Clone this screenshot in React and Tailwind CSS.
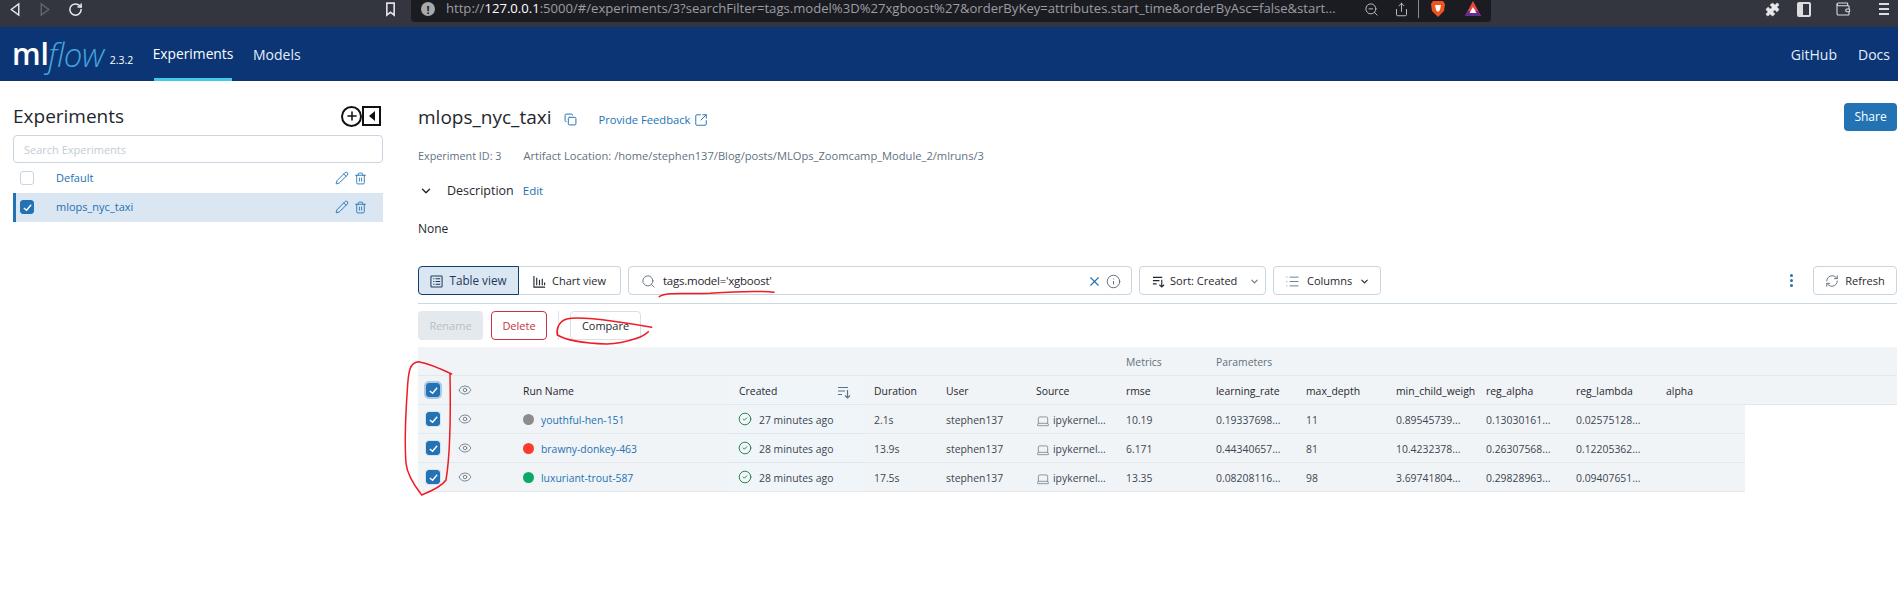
import React from "react";
import { Eye, Pencil, Trash2, Search, X, Info, ChevronDown, RotateCw, Laptop, CircleCheck, Copy, SquareArrowOutUpRight, ZoomOut, Share, Puzzle, Wallet, RefreshCw, Plus, List } from "lucide-react";

const font = "font-['Open_Sans',sans-serif]";

function Check({ on, focus, small }) {
  return (
    <span className={`flex h-[14px] w-[14px] shrink-0 items-center justify-center rounded-[3px] border ${on ? "border-[#2272b4] bg-[#2272b4]" : "border-[#c9d5e0] bg-white"} ${focus ? "shadow-[0_0_0_2px_#a9c9e6]" : small ? "shadow-[0_0_0_1px_#d5e3ef]" : ""}`}>
      {on && (
        <svg viewBox="0 0 12 12" className="h-[11px] w-[11px]" fill="none" stroke="white" strokeWidth="1.5"><path d="M2 6.5 5 9l5-6" /></svg>
      )}
    </span>
  );
}

function SortIcon({ className }) {
  return (
    <svg viewBox="0 0 14 14" className={className} fill="none" stroke="currentColor" strokeWidth="1.2">
      <path d="M1 2.5h10M1 6h7M1 9.5h4M10.5 5v8M8 10.5l2.5 2.5 2.5-2.5" />
    </svg>
  );
}

function Hcell({ w, children, className = "" }) {
  return <div className={`flex h-full shrink-0 items-center pl-2 pt-[3px] ${w} ${className}`}>{children}</div>;
}

const cols = [
  { name: "youthful-hen-151", dot: "bg-[#8c8c8c]", time: "27 minutes ago", dur: "2.1s", rmse: "10.19", vals: ["0.19337698...", "11", "0.89545739...", "0.13030161...", "0.02575128..."] },
  { name: "brawny-donkey-463", dot: "bg-[#fb3b2c]", time: "28 minutes ago", dur: "13.9s", rmse: "6.171", vals: ["0.44340657...", "81", "10.4232378...", "0.26307568...", "0.12205362..."] },
  { name: "luxuriant-trout-587", dot: "bg-[#0ba868]", time: "28 minutes ago", dur: "17.5s", rmse: "13.35", vals: ["0.08208116...", "98", "3.69741804...", "0.29828963...", "0.09407651..."] },
];

export default function App() {
  return (
    <div className={`relative h-[606px] w-[1898px] overflow-hidden bg-white ${font} text-[#1f272d]`}>
      {/* browser chrome */}
      <div className="flex h-[27px] items-start bg-[#33353f] text-[#d8dae0]">
        <div className="flex h-[22px] w-[411px] shrink-0 items-center pb-[4px]">
          <svg viewBox="0 0 12 16" className="ml-[9px] h-[15px] w-[12px]" fill="none" stroke="#e8e8ea" strokeWidth="1.5"><path d="M10 2 2 8l8 6z" /></svg>
          <svg viewBox="0 0 12 16" className="ml-[18px] h-[15px] w-[12px]" fill="none" stroke="#63656e" strokeWidth="1.5"><path d="M2 2l8 6-8 6z" /></svg>
          <RotateCw className="ml-[17px] h-[15px] w-[15px] text-[#e8e8ea]" strokeWidth={2.4} />
          <svg viewBox="0 0 12 16" className="ml-[302px] h-[15px] w-[11px]" fill="none" stroke="#e0e0e4" strokeWidth="1.8"><path d="M2 1h8v13l-4-3-4 3z" /></svg>
        </div>
        <div className="flex h-[22px] w-[1080px] shrink-0 items-center rounded-b-[4px] bg-[#1b1c22] pb-[4px]">
          <span className="ml-[10px] flex h-[14px] w-[14px] items-center justify-center rounded-full bg-[#a8a9ad] text-[11px] font-bold leading-none text-[#1b1c22]">!</span>
          <span className="ml-[11px] w-[906px] shrink-0 whitespace-nowrap text-[13.1px] leading-none text-[#9b9da3]">http://<span className="text-white">127.0.0.1</span>:5000/#/experiments/3?searchFilter=tags.model%3D%27xgboost%27&amp;orderByKey=attributes.start_time&amp;orderByAsc=false&amp;start...</span>
          <ZoomOut className="ml-[12px] h-[15px] w-[15px] text-[#c4c5c9]" strokeWidth={1.5} />
          <Share className="ml-[15px] h-[15px] w-[15px] text-[#c4c5c9]" strokeWidth={1.5} />
          <span className="ml-[9px] h-[18px] w-px bg-[#8a8b90]" />
          <svg viewBox="0 0 16 18" className="ml-[11px] h-[18px] w-[16px]"><path d="M3 1h10l2 3-1 7-6 6-6-6-1-7z" fill="#f1531d" /><path d="M5 5h6l-1 5-2 2-2-2z" fill="#fff" /></svg>
          <svg viewBox="0 0 18 18" className="ml-[18px] h-[18px] w-[18px]"><path d="M9 1 17 16H1z" fill="#e8483f" /><path d="M1 16h16l-3-5H4z" fill="#662d91" /><path d="M9 7l3.5 6h-7z" fill="#fff" /></svg>
        </div>
        <div className="flex h-[22px] flex-1 items-center pb-[4px] text-[#dcdde1]">
          <Puzzle className="ml-[274px] h-[15px] w-[15px] fill-[#e8e8ea]" strokeWidth={1} />
          <span className="ml-[17px] flex h-[15px] w-[14px] rounded-[2px] border-2 border-[#dcdde1]"><span className="w-[4px] bg-[#dcdde1]" /></span>
          <Wallet className="ml-[24px] h-[16px] w-[16px]" strokeWidth={1.6} />
          <span className="ml-[28px] flex w-[10px] flex-col gap-[3px]"><span className="h-[2px] bg-[#dcdde1]" /><span className="h-[2px] bg-[#dcdde1]" /><span className="h-[2px] bg-[#dcdde1]" /></span>
        </div>
      </div>

      {/* app header */}
      <div className="flex h-[54px] bg-[#0b3574] text-[#e3eefa]">
        <div className="flex w-[154px] shrink-0 items-center pl-[12px]">
          <span className="text-[30px] font-semibold leading-none text-white">ml</span>
          <span className="-ml-px text-[33px] font-light italic leading-none tracking-[-0.5px] text-[#43a3dd]">flow</span>
          <span className="ml-[6px] mt-[13px] text-[10.5px] leading-none text-white">2.3.2</span>
        </div>
        <div className="flex h-full w-[78px] items-center justify-center border-b-[3px] border-[#43c9ed] pt-[4px] text-[13.8px] text-white">Experiments</div>
        <div className="ml-[21px] flex h-full items-center pt-[1px] text-[14px]">Models</div>
        <div className="ml-auto flex h-full items-center gap-[21px] pr-[8px] pt-[1px] text-[14px]">
          <span>GitHub</span>
          <span>Docs</span>
        </div>
      </div>

      {/* body */}
      <div className="flex">
        <aside className="w-[418px] shrink-0 pl-[13px] pr-[35px]">
          <div className="flex h-[54px] items-center justify-between pl-0 pr-[2px] pt-[16px]">
            <h1 className="text-[19px] font-medium leading-none">Experiments</h1>
            <div className="flex items-center">
              <span className="flex h-[21px] w-[21px] items-center justify-center rounded-full border-2 border-[#111]"><Plus className="h-[14px] w-[14px] text-[#111]" strokeWidth={2.6} /></span>
              <span className="flex h-[20px] w-[19px] items-center justify-center border-2 border-[#111]"><span className="h-0 w-0 border-y-[5px] border-r-[6px] border-y-transparent border-r-[#111]" /></span>
            </div>
          </div>
          <div className="flex h-[28px] items-center rounded-[4px] border border-[#c9d5e0] pl-[10px] pt-[2px] text-[11px] text-[#c3ccd4]">Search Experiments</div>
          <div className="flex h-[30px] items-center pl-[7px] pr-[16px] text-[11px] text-[#2272b4]">
            <Check />
            <span className="ml-[22px]">Default</span>
            <Pencil className="ml-auto h-[14px] w-[14px]" strokeWidth={1.6} />
            <Trash2 className="ml-[5px] h-[13px] w-[13px]" strokeWidth={1.6} />
          </div>
          <div className="flex h-[29px] items-center border-l-[3px] border-[#2272b4] bg-[#dae6f2] pb-[1px] pl-[4px] pr-[16px] text-[11px] text-[#2272b4]">
            <Check on />
            <span className="ml-[22px]">mlops_nyc_taxi</span>
            <Pencil className="ml-auto h-[14px] w-[14px]" strokeWidth={1.6} />
            <Trash2 className="ml-[5px] h-[13px] w-[13px]" strokeWidth={1.6} />
          </div>
        </aside>

        <main className="flex-1 pr-px">
          <div className="flex h-[50px] items-end justify-between">
            <div className="flex items-center pb-[1px]">
              <span className="text-[19px] font-medium leading-[26px]">mlops_nyc_taxi</span>
              <Copy className="ml-[13px] mt-[4px] h-[13px] w-[13px] text-[#2272b4]" strokeWidth={1.8} />
              <span className="ml-[21px] mt-[6px] text-[11.2px] text-[#2272b4]">Provide Feedback</span>
              <SquareArrowOutUpRight className="ml-[4px] mt-[5px] h-[14px] w-[14px] text-[#2272b4]" strokeWidth={1.6} />
            </div>
            <button className="mb-[-1px] mt-[22px] h-[28px] w-[53px] self-start rounded-[4px] bg-[#2272b4] text-[12px] text-white">Share</button>
          </div>
          <div className="mt-[17px] flex h-[16px] items-center gap-[22px] text-[11.15px] text-[#5f7281]">
            <span className="text-[10.8px]">Experiment ID: 3</span>
            <span>Artifact Location: /home/stephen137/Blog/posts/MLOps_Zoomcamp_Module_2/mlruns/3</span>
          </div>
          <div className="mt-[17px] flex h-[20px] items-center">
            <ChevronDown className="ml-[1px] h-[14px] w-[14px]" strokeWidth={2.4} />
            <span className="ml-[14px] text-[12.5px]">Description</span>
            <span className="ml-[9px] text-[11.5px] text-[#2272b4]">Edit</span>
          </div>
          <div className="mt-[19px] h-[18px] text-[12px] leading-[18px]">None</div>

          {/* toolbar */}
          <div className="mt-[28px] flex h-[29px] items-center whitespace-nowrap text-[11px]">
            <div className="flex h-full w-[101px] items-center justify-center gap-[6px] rounded-l-[4px] border border-[#0e3f6e] bg-[#dae6f2] pt-px text-[11.7px] text-[#1f3a5a]">
              <svg viewBox="0 0 14 14" className="h-[13px] w-[13px]" fill="none" stroke="currentColor" strokeWidth="1.1"><rect x="1" y="1" width="12" height="12" rx="1" /><path d="M3.5 4h1.2M3.5 7h1.2M3.5 10h1.2M6 4h5M6 7h5M6 10h5" /></svg>
              <span>Table view</span>
            </div>
            <div className="flex h-full w-[102px] items-center justify-center gap-[6px] rounded-r-[4px] border border-l-0 border-[#c9d5e0] pt-px">
              <svg viewBox="0 0 14 14" className="h-[13px] w-[13px]" fill="none" stroke="currentColor" strokeWidth="1.2"><path d="M1 1v12h12M4 11V3M7 11V5M10 11V4M12.5 11V8" /></svg>
              <span>Chart view</span>
            </div>
            <div className="ml-[7px] flex h-full w-[504px] items-center rounded-[4px] border border-[#c9d5e0] pl-[12px] pr-[10px] pt-px">
              <Search className="h-[15px] w-[15px] text-[#5f7281]" strokeWidth={1.5} />
              <span className="ml-[7px] text-[11.5px] tracking-[-0.25px]">tags.model='xgboost'</span>
              <X className="ml-auto h-[15px] w-[15px] text-[#2272b4]" strokeWidth={1.8} />
              <Info className="ml-[4px] h-[15px] w-[15px] text-[#5f7281]" strokeWidth={1.6} />
            </div>
            <div className="ml-[7px] flex h-full w-[127px] items-center rounded-[4px] border border-[#c9d5e0] pl-[12px] pt-px">
              <SortIcon className="h-[13px] w-[13px]" />
              <span className="ml-[5px]">Sort: Created</span>
              <ChevronDown className="ml-[12px] h-[11px] w-[11px] text-[#5f7281]" strokeWidth={2.2} />
            </div>
            <div className="ml-[7px] flex h-full w-[108px] items-center rounded-[4px] border border-[#c9d5e0] pl-[11px] pt-px">
              <List className="h-[15px] w-[15px] text-[#5f7281]" strokeWidth={1.4} />
              <span className="ml-[7px]">Columns</span>
              <ChevronDown className="ml-[7px] h-[11px] w-[11px]" strokeWidth={2.4} />
            </div>
            <div className="ml-auto flex flex-col gap-[2px]">
              <span className="h-[3px] w-[3px] rounded-full bg-[#2272b4]" />
              <span className="h-[3px] w-[3px] rounded-full bg-[#2272b4]" />
              <span className="h-[3px] w-[3px] rounded-full bg-[#2272b4]" />
            </div>
            <div className="ml-[20px] flex h-full w-[84px] items-center justify-center gap-[6px] rounded-[4px] border border-[#c9d5e0] pt-px">
              <RefreshCw className="h-[14px] w-[14px] text-[#5f7281]" strokeWidth={1.6} />
              <span>Refresh</span>
            </div>
          </div>
          <div className="mt-[8px] h-px bg-[#c9d9e6]" />

          {/* action row */}
          <div className="mt-[7px] flex h-[29px] items-center text-[11px]">
            <div className="flex h-full w-[65px] items-center justify-center rounded-[4px] bg-[#e4e9ee] pt-px text-[#b5c0ca]">Rename</div>
            <div className="ml-[8px] flex h-full w-[56px] items-center justify-center rounded-[4px] border border-[#c83243] pt-px text-[#c83243]">Delete</div>
            <div className="ml-[11px] h-full w-px bg-[#dde3e8]" />
            <div className="ml-[11px] flex h-full w-[71px] items-center justify-center rounded-[4px] border border-[#d8e0e7] pt-px">Compare</div>
          </div>

          {/* table */}
          <div className="mt-[7px] whitespace-nowrap text-[10.4px]">
            <div className="flex h-[29px] items-center border-b border-[#e3e8ed] bg-[#f1f4f7] pt-[3px] text-[#5f7281]">
              <div className="w-[700px] shrink-0" />
              <div className="w-[90px] shrink-0 pl-2">Metrics</div>
              <div className="pl-2">Parameters</div>
            </div>
            <div className="flex h-[29px] border-b border-[#e3e8ed] bg-[#f1f4f7]">
              <Hcell w="w-[32px]" className="!pt-0"><Check on focus /></Hcell>
              <Hcell w="w-[65px]" className="!pt-0"><Eye className="h-[14px] w-[14px] text-[#5f7281]" strokeWidth={1.4} /></Hcell>
              <Hcell w="w-[213px]">Run Name</Hcell>
              <Hcell w="w-[138px]" className="bg-[#f0f5fa] !pl-[11px] pr-[15px]">
                <span>Created</span>
                <SortIcon className="ml-auto h-[14px] w-[14px] text-[#5f7281]" />
              </Hcell>
              <Hcell w="w-[72px]">Duration</Hcell>
              <Hcell w="w-[90px]">User</Hcell>
              <Hcell w="w-[90px]">Source</Hcell>
              <Hcell w="w-[90px]">rmse</Hcell>
              <Hcell w="w-[90px]">learning_rate</Hcell>
              <Hcell w="w-[90px]">max_depth</Hcell>
              <Hcell w="w-[90px]">min_child_weigh</Hcell>
              <Hcell w="w-[90px]">reg_alpha</Hcell>
              <Hcell w="w-[90px]">reg_lambda</Hcell>
              <Hcell w="w-[87px]">alpha</Hcell>
            </div>
            {cols.map((r) => (
              <div key={r.name} className="flex h-[29px] w-[1327px] border-b border-[#e3e8ed] bg-[#f1f4f7] text-[#3c4650]">
                <Hcell w="w-[32px]" className="!pt-0"><Check on small /></Hcell>
                <Hcell w="w-[65px]" className="!pt-0"><Eye className="h-[14px] w-[14px] text-[#5f7281]" strokeWidth={1.4} /></Hcell>
                <Hcell w="w-[213px]">
                  <span className={`-mt-[3px] h-[11px] w-[11px] rounded-full ${r.dot}`} />
                  <span className="ml-[7px] text-[#2272b4]">{r.name}</span>
                </Hcell>
                <Hcell w="w-[138px]" className="bg-[#f0f5fa] !pl-[10px]">
                  <CircleCheck className="-mt-[3px] h-[14px] w-[14px] text-[#277c43]" strokeWidth={1.6} />
                  <span className="ml-[7px]">{r.time}</span>
                </Hcell>
                <Hcell w="w-[72px]">{r.dur}</Hcell>
                <Hcell w="w-[90px]">stephen137</Hcell>
                <Hcell w="w-[90px]">
                  <Laptop className="h-[14px] w-[14px] text-[#5f7281]" strokeWidth={1.2} />
                  <span className="ml-[3px]">ipykernel...</span>
                </Hcell>
                <Hcell w="w-[90px]">{r.rmse}</Hcell>
                {r.vals.map((v, i) => (
                  <Hcell key={i} w="w-[90px]">{v}</Hcell>
                ))}
              </div>
            ))}
          </div>
        </main>
      </div>

      {/* red pen annotations */}
      <svg className="pointer-events-none absolute left-0 top-0 h-[606px] w-[1898px]" viewBox="0 0 1898 606" fill="none">
        <g transform="translate(400 250) scale(0.3333)" stroke="#ee1c25" strokeWidth="4.5" strokeLinecap="round" strokeLinejoin="round">
          <path d="M155 372 C120 355 85 340 55 335 C30 338 25 360 22 420 C18 480 12 560 18 640 C22 680 50 715 65 735 C90 725 125 710 138 690 C150 620 152 480 150 372" />
          <path d="M778 140 C800 125 850 133 930 130 C1000 125 1080 122 1122 127" />
          <path d="M755 232 C700 222 670 218 640 214 C590 207 530 200 500 207 C478 214 468 235 472 255 C500 272 560 280 620 282 C660 282 690 272 710 265 C730 258 740 250 745 245" />
        </g>
      </svg>
    </div>
  );
}
